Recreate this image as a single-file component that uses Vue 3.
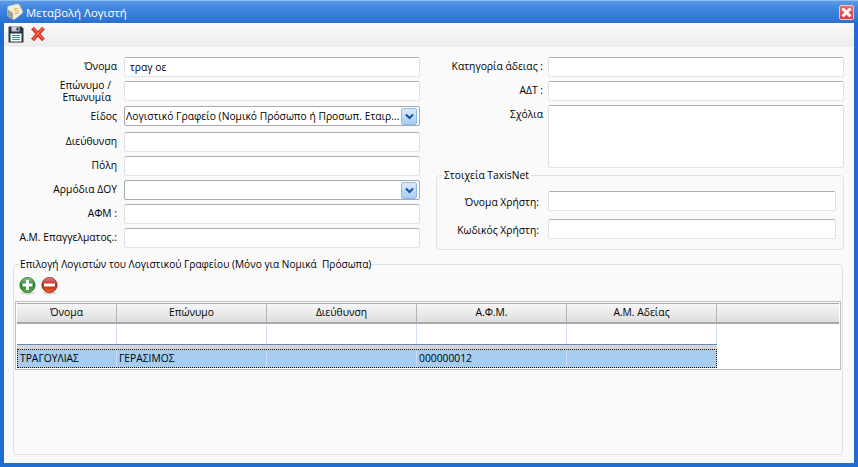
<template>
  <div class="window">
    <div class="titlebar">
      <svg class="app-icon" width="18" height="18" viewBox="0 0 18 18">
        <path d="M1.5 5 Q1.5 3.5 3 3 L11 1 Q12.5 0.8 13.5 2 L16.5 8 Q17 9.5 16 10.5 L9 16 Q8 16.8 6.5 16 L3 14 Q1.5 13 1.5 11.5 Z" fill="#f3eedd" stroke="#c8c2a8" stroke-width="0.6" />
        <path d="M1.5 6 L7 10 L7 16 L3 14 Q1.5 13 1.5 11.5 Z" fill="#a3a08f" />
        <text x="8" y="10.5" font-size="9" fill="#e8a22c" font-family="Liberation Sans, sans-serif">5</text>
      </svg>
      <span class="title">Μεταβολή Λογιστή</span>
      <button class="close-btn">
        <svg width="13" height="13" viewBox="0 0 13 13">
          <path d="M2.5 2.5 L10.5 10.5 M10.5 2.5 L2.5 10.5" stroke="#fff" stroke-width="3" />
        </svg>
      </button>
    </div>

    <div class="body">
      <div class="toolbar">
        <svg width="16" height="17" viewBox="0 0 16 17">
          <path d="M0.5 0.5 H13.5 L15.5 2.5 V16.5 H0.5 Z" fill="#2c3446" />
          <rect x="3.5" y="0.5" width="8" height="5" fill="#c9cdd6" />
          <rect x="8.5" y="1.5" width="2" height="3" fill="#2c3446" />
          <rect x="2.5" y="7.5" width="11" height="8" fill="#fff" />
          <path d="M4 9.5 H12 M4 11.5 H12 M4 13.5 H12" stroke="#2f8fe6" stroke-width="1" />
        </svg>
        <svg width="16" height="16" viewBox="0 0 16 16">
          <path d="M2.5 2 L13.5 14 M13.5 2 L2.5 14" stroke="#e0301e" stroke-width="4" />
          <path d="M3 2 L13.5 13.5 M13 2 L3 13.5" stroke="#f58a70" stroke-width="1" />
        </svg>
      </div>

      <div class="form">
        <div class="left-col">
          <div v-for="row in leftRows" :key="row.label" class="row">
            <label :class="{ wrapped: row.wrapped, low: row.low }">{{ row.label }}</label>
            <div v-if="row.select" class="select">
              <span class="select-text">{{ row.value }}</span>
              <span class="select-btn">
                <svg width="9" height="7" viewBox="0 0 9 7">
                  <path d="M1 1.5 L4.5 5 L8 1.5" fill="none" stroke="#1d4f9c" stroke-width="2" />
                </svg>
              </span>
            </div>
            <div v-else class="input">{{ row.value }}</div>
          </div>
        </div>

        <div class="right-col">
          <div class="row">
            <label>Κατηγορία άδειας :</label>
            <div class="input"></div>
          </div>
          <div class="row">
            <label>ΑΔΤ :</label>
            <div class="input"></div>
          </div>
          <div class="row notes-row">
            <label>Σχόλια</label>
            <div class="input notes"></div>
          </div>
          <fieldset class="taxis">
            <legend>Στοιχεία TaxisNet</legend>
            <div class="row">
              <label>Όνομα Χρήστη:</label>
              <div class="input"></div>
            </div>
            <div class="row">
              <label>Κωδικός Χρήστη:</label>
              <div class="input"></div>
            </div>
          </fieldset>
        </div>
      </div>

      <fieldset class="accountants">
        <legend>Επιλογή Λογιστών του Λογιστικού Γραφείου (Μόνο για Νομικά&nbsp; Πρόσωπα)</legend>
        <div class="grid-tools">
          <svg width="17" height="18" viewBox="0 0 17 18">
            <defs>
              <linearGradient id="greenBall" x1="0" y1="0" x2="0" y2="1">
                <stop offset="0" stop-color="#8cc98c" />
                <stop offset="0.5" stop-color="#1f8a2e" />
                <stop offset="1" stop-color="#5fb04a" />
              </linearGradient>
            </defs>
            <ellipse cx="8.5" cy="16" rx="7" ry="1.5" fill="#d5d5d5" />
            <circle cx="8.5" cy="8" r="7.6" fill="url(#greenBall)" stroke="#1d6b27" stroke-width="0.8" />
            <path d="M8.5 3 V13 M3.5 8 H13.5" stroke="#fff" stroke-width="3" />
          </svg>
          <svg width="17" height="18" viewBox="0 0 17 18">
            <defs>
              <linearGradient id="redBall" x1="0" y1="0" x2="0" y2="1">
                <stop offset="0" stop-color="#e28a80" />
                <stop offset="0.5" stop-color="#c0201a" />
                <stop offset="1" stop-color="#ea6a2a" />
              </linearGradient>
            </defs>
            <ellipse cx="8.5" cy="16" rx="7" ry="1.5" fill="#d5d5d5" />
            <circle cx="8.5" cy="8" r="7.6" fill="url(#redBall)" stroke="#8f1d16" stroke-width="0.8" />
            <path d="M3 8 H14" stroke="#fff" stroke-width="3" />
          </svg>
        </div>

        <div class="grid">
          <div class="grid-head">
            <div v-for="col in columns" :key="col" class="head-cell">{{ col }}</div>
            <div class="head-cell head-fill"></div>
          </div>
          <div class="grid-row filter-row">
            <div v-for="col in columns" :key="col" class="cell"></div>
          </div>
          <div class="grid-gap"></div>
          <div class="grid-row selected">
            <div v-for="(val, i) in record" :key="i" class="cell">{{ val }}</div>
          </div>
        </div>
      </fieldset>
    </div>
  </div>
</template>

<script setup>
const leftRows = [
  { label: 'Όνομα', value: 'τραγ οε' },
  { label: 'Επώνυμο / Επωνυμία', value: '', wrapped: true },
  { label: 'Είδος', value: 'Λογιστικό Γραφείο (Νομικό Πρόσωπο ή Προσωπ. Εταιρ...', select: true, low: true },
  { label: 'Διεύθυνση', value: '' },
  { label: 'Πόλη', value: '' },
  { label: 'Αρμόδια ΔΟΥ', value: '', select: true },
  { label: 'ΑΦΜ :', value: '' },
  { label: 'Α.Μ. Επαγγελματος.:', value: '' }
]

const columns = ['Όνομα', 'Επώνυμο', 'Διεύθυνση', 'Α.Φ.Μ.', 'Α.Μ. Αδείας']
const record = ['ΤΡΑΓΟΥΛΙΑΣ', 'ΓΕΡΑΣΙΜΟΣ', '', '000000012', '']
</script>

<style>
html, body {
  margin: 0;
  overflow: hidden;
}
</style>

<style scoped>
.window {
  width: 858px;
  height: 467px;
  display: flex;
  flex-direction: column;
  font-family: "Open Sans", "Noto Sans", sans-serif;
  font-size: 10.3px;
  color: #000;
  background: #1f6cd0;
}

.titlebar {
  height: 23px;
  flex: none;
  display: flex;
  align-items: center;
  padding: 0 4px 0 6px;
  box-sizing: border-box;
  background: linear-gradient(#5b9be6, #3f86df 35%, #2a70d2);
  border-top: 1px solid #8cbcf0;
}

.app-icon {
  margin-right: 2px;
}

.title {
  flex: 1;
  color: #fff;
  font-size: 11.4px;
}

.close-btn {
  width: 15px;
  height: 15px;
  padding: 0;
  border: 1px solid #fbc4c0;
  border-radius: 2px;
  background: linear-gradient(#f26a6a, #dd3b3b);
  display: flex;
  align-items: center;
  justify-content: center;
}

.body {
  flex: 1;
  margin: 0 4px 4px;
  background: #fafafa;
  display: flex;
  flex-direction: column;
  min-height: 0;
}

.toolbar {
  height: 24px;
  flex: none;
  display: flex;
  align-items: center;
  gap: 6px;
  padding: 0 0 2px 4px;
  box-sizing: border-box;
  background: linear-gradient(#fbfbfb, #ececec);
  border-radius: 0 0 4px 4px;
}

.form {
  display: flex;
  padding: 10px 10px 0 0;
  height: 205px;
  box-sizing: border-box;
}

.left-col {
  width: 416px;
  flex: none;
  display: grid;
  grid-template-columns: minmax(0, 1fr);
  grid-template-rows: 24px 25px 26px 24px 24px 24px 24px 24px;
}

.right-col {
  margin-left: 16px;
  flex: 1;
  min-width: 0;
  display: flex;
  flex-direction: column;
  gap: 4px;
}

.row {
  display: flex;
  height: 20px;
}

.row label {
  flex: none;
  text-align: right;
  padding-top: 2px;
  line-height: 14px;
}

.left-col .row label {
  width: 113px;
  padding-right: 7px;
}

.left-col .row label.low {
  padding-top: 3px;
}

.left-col .row label.wrapped {
  width: 55px;
  margin-left: 52px;
  padding: 0 13px 0 0;
  margin-top: -2px;
  line-height: 12px;
}

.input,
.select {
  flex: 1;
  min-width: 0;
  height: 20px;
  box-sizing: border-box;
  background: #fff;
  line-height: 19px;
  padding-left: 5px;
  border-radius: 2px;
}

.input {
  border: 1px solid #dfe2e8;
  border-top-color: #aeaeae;
}

.select {
  display: flex;
  align-items: center;
  border: 1px solid #a9a9a9;
  padding-left: 1px;
  padding-right: 2px;
}

.select-text {
  flex: 1;
  min-width: 0;
  white-space: nowrap;
  overflow: hidden;
}

.select-btn {
  width: 14px;
  height: 15px;
  flex: none;
  border: 1px solid #8fbbe8;
  border-radius: 2px;
  background: linear-gradient(#d9ebfb, #a6cdf4);
  display: flex;
  align-items: center;
  justify-content: center;
}

.right-col .row label {
  width: 107px;
  padding-right: 5px;
}

.notes-row {
  height: 63px;
}

.notes {
  height: 63px;
}

.taxis {
  margin: -3px 0 0;
  padding: 9px 7px 0 0;
  height: 81px;
  box-sizing: border-box;
  border: 1px solid #dfe2e8;
  border-radius: 4px;
  display: flex;
  flex-direction: column;
  gap: 8px;
  min-width: 0;
}

.taxis legend {
  padding: 0 2px;
  margin-left: 5px;
  line-height: 13px;
}

.right-col .taxis .row label {
  width: 102px;
  padding-right: 9px;
  padding-top: 4px;
}

.accountants {
  margin: 6px 11px 0 9px;
  padding: 0 1px 1px;
  height: 197px;
  box-sizing: border-box;
  border: 1px solid #dfe2e8;
  border-radius: 4px;
  display: flex;
  flex-direction: column;
  min-width: 0;
}

.accountants legend {
  padding: 0 1px;
  margin-left: 4px;
  line-height: 13px;
  font-size: 10.15px;
}

.grid-tools {
  height: 30px;
  flex: none;
  display: flex;
  gap: 5px;
  align-items: flex-start;
  padding: 6px 0 0 4px;
  box-sizing: border-box;
}

.grid {
  flex: 1;
  border: 1px solid #bdbdbd;
  background: #fff;
  padding: 1px;
  min-height: 0;
}

.grid-head {
  display: flex;
  height: 21px;
  background: #b4b4b4;
  border-top: 1px solid #a9a9a9;
  border-bottom: 2px solid #a9a9a9;
  box-sizing: border-box;
}

.head-cell {
  width: 149px;
  flex: none;
  text-align: center;
  line-height: 17px;
  margin-right: 1px;
  background: linear-gradient(#f6f6f6, #dedede);
}

.head-cell:first-child {
  width: 99px;
}

.head-fill {
  flex: 1;
  margin-right: 0;
}

.grid-row {
  display: flex;
  width: 700px;
}

.cell {
  width: 149px;
  flex: none;
  height: 100%;
  border-right: 1px solid #cfdcf8;
  line-height: 18px;
  white-space: nowrap;
  text-indent: 2px;
}

.cell:first-child {
  width: 99px;
}

.filter-row {
  height: 20px;
}

.grid-gap {
  width: 700px;
  height: 5px;
  background: #d6d6d6;
  border-top: 1px solid #6f86b8;
  box-sizing: border-box;
}

.selected {
  height: 19px;
  box-sizing: border-box;
  background: #a6cdf0;
  outline: 1px dotted #111;
  outline-offset: -1px;
  padding-left: 2px;
}

.selected .cell:first-child {
  width: 97px;
  text-indent: 1px;
}
</style>
